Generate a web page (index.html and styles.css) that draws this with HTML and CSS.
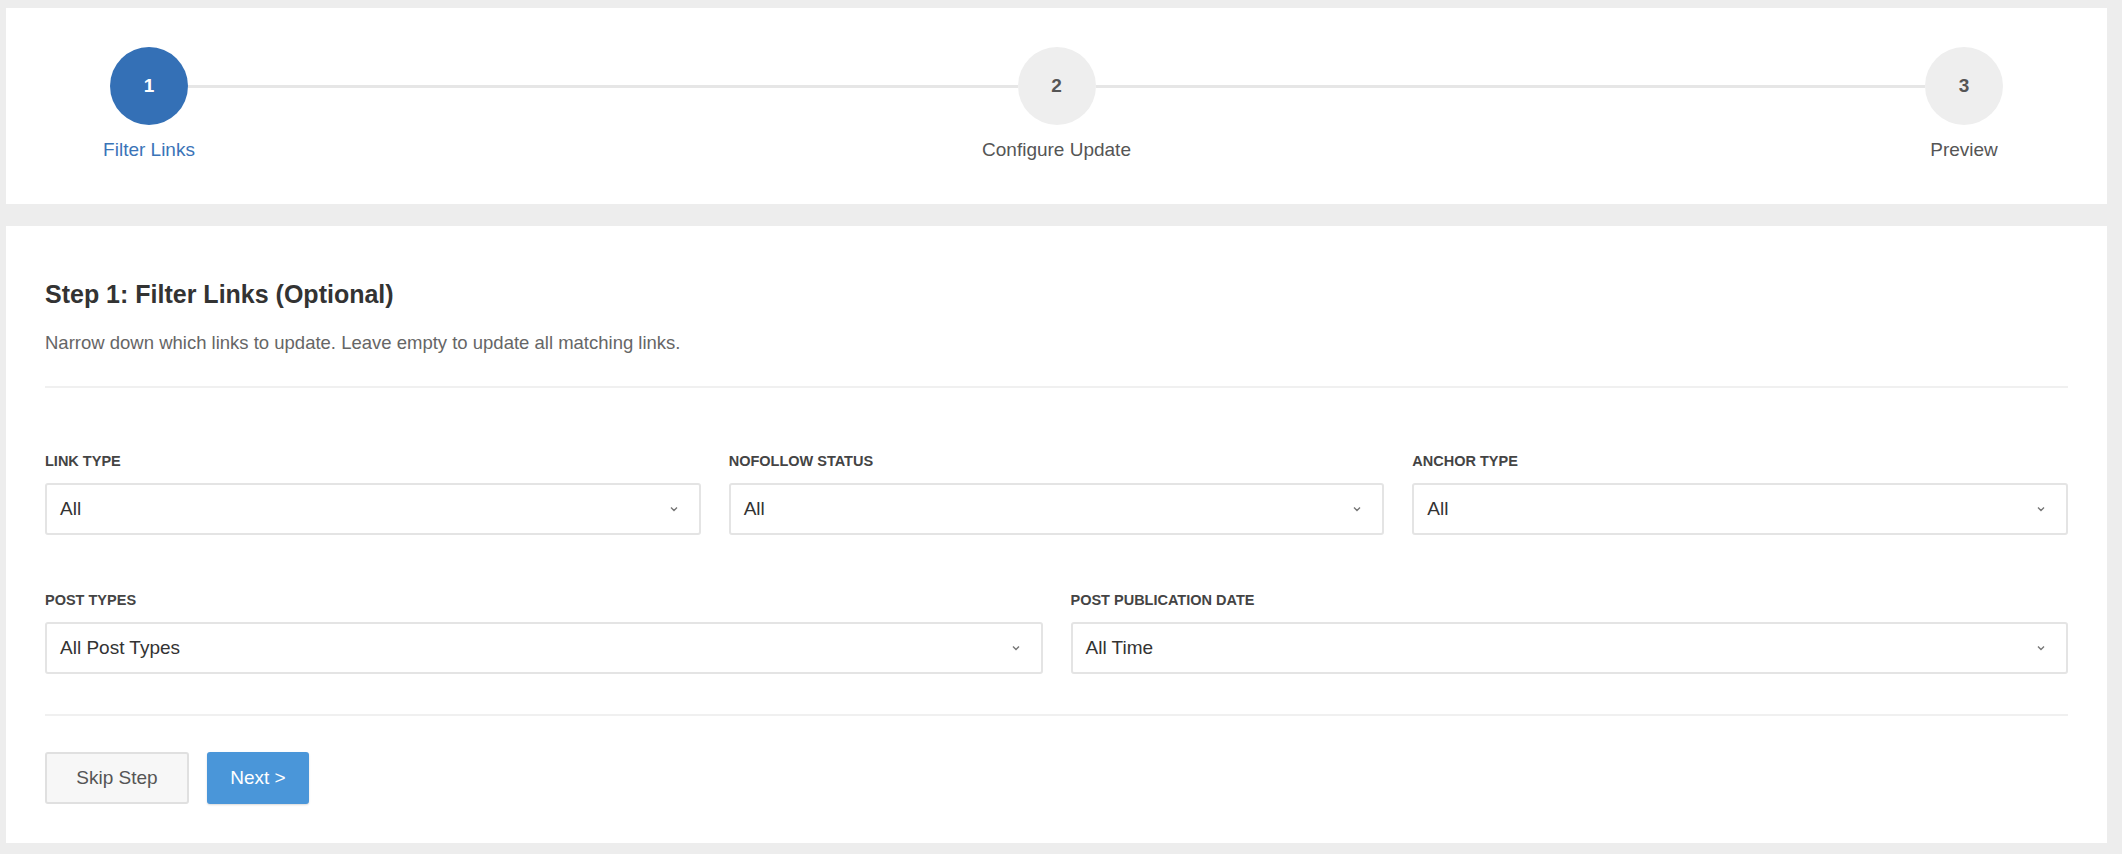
FILE: index.html
```html
<!DOCTYPE html>
<html>

<head>
  <meta charset="utf-8">

  <title>Bulk update links</title>

  <link rel="stylesheet" href="styles.css">
</head>

<body>
<div id="wrapper">
  <div class="card stepper">
    <div class="step active">
      <div class="circle">1</div>
      <div class="stepLabel">Filter Links</div>
    </div>
    <div class="connector"></div>
    <div class="step">
      <div class="circle">2</div>
      <div class="stepLabel">Configure Update</div>
    </div>
    <div class="connector"></div>
    <div class="step">
      <div class="circle">3</div>
      <div class="stepLabel">Preview</div>
    </div>
  </div>

  <div class="card panel">
    <h2>Step 1: Filter Links (Optional)</h2>
    <p class="desc">Narrow down which links to update. Leave empty to update all matching links.</p>
    <hr>

    <div class="row three">
      <div class="field">
        <label>Link Type</label>
        <div class="select"><span>All</span><svg width="10" height="10" viewBox="0 0 10 10"><path d="M2 3.5l3 3 3-3" fill="none" stroke="#777" stroke-width="1.4"/></svg></div>
      </div>
      <div class="field">
        <label>Nofollow Status</label>
        <div class="select"><span>All</span><svg width="10" height="10" viewBox="0 0 10 10"><path d="M2 3.5l3 3 3-3" fill="none" stroke="#777" stroke-width="1.4"/></svg></div>
      </div>
      <div class="field">
        <label>Anchor Type</label>
        <div class="select"><span>All</span><svg width="10" height="10" viewBox="0 0 10 10"><path d="M2 3.5l3 3 3-3" fill="none" stroke="#777" stroke-width="1.4"/></svg></div>
      </div>
    </div>

    <div class="row two">
      <div class="field">
        <label>Post Types</label>
        <div class="select"><span>All Post Types</span><svg width="10" height="10" viewBox="0 0 10 10"><path d="M2 3.5l3 3 3-3" fill="none" stroke="#777" stroke-width="1.4"/></svg></div>
      </div>
      <div class="field">
        <label>Post Publication Date</label>
        <div class="select"><span>All Time</span><svg width="10" height="10" viewBox="0 0 10 10"><path d="M2 3.5l3 3 3-3" fill="none" stroke="#777" stroke-width="1.4"/></svg></div>
      </div>
    </div>

    <hr class="bottomRule">

    <div class="actions">
      <button class="skip">Skip Step</button>
      <button class="next">Next &gt;</button>
    </div>
  </div>
</div>
</body>

</html>
```

FILE: styles.css
```css
* {
  font-family: "Liberation Sans", Arial, sans-serif;
  box-sizing: border-box;
}

body {
  margin: 0;
  background-color: #ededed;
}

#wrapper {
  padding: 8px 15px 0 6px;
}

.card {
  background-color: #fff;
}

/* stepper */

.stepper {
  display: flex;
  align-items: flex-start;
  height: 196px;
  padding: 39px 104px 0 104px;
}

.step {
  width: 78px;
  display: flex;
  flex-direction: column;
  align-items: center;
}

.circle {
  width: 78px;
  height: 78px;
  border-radius: 50%;
  background-color: #eeeeee;
  color: #555;
  font-size: 19px;
  font-weight: bold;
  display: flex;
  align-items: center;
  justify-content: center;
}

.stepLabel {
  margin-top: 14px;
  font-size: 19px;
  color: #555;
  white-space: nowrap;
}

.step.active .circle {
  background-color: #3470b6;
  color: #fff;
}

.step.active .stepLabel {
  color: #3a74b8;
}

.connector {
  flex: 1;
  height: 3px;
  margin-top: 38px;
  background-color: #e6e6e6;
}

/* filter panel */

.panel {
  margin-top: 22px;
  padding: 53px 39px 39px 39px;
}

h2 {
  margin: 0;
  font-size: 25px;
  line-height: 30px;
  color: #333;
}

.desc {
  margin: 21px 0 0 0;
  font-size: 18.5px;
  line-height: 26px;
  color: #666;
}

hr {
  border: none;
  height: 2px;
  background-color: #f0f0f0;
  margin: 30px 0 0 0;
}

.row {
  display: grid;
  gap: 28px;
  margin-top: 64px;
}

.row.three {
  grid-template-columns: 1fr 1fr 1fr;
}

.row.two {
  grid-template-columns: 1fr 1fr;
  margin-top: 56px;
}

label {
  display: block;
  font-size: 14.5px;
  line-height: 18px;
  font-weight: bold;
  text-transform: uppercase;
  color: #444;
}

.select {
  margin-top: 13px;
  height: 52px;
  border: 2px solid #e4e4e4;
  border-radius: 3px;
  display: flex;
  align-items: center;
  justify-content: space-between;
  padding: 0 20px 0 13px;
  font-size: 19px;
  color: #333;
}

hr.bottomRule {
  margin-top: 40px;
}

.actions {
  display: flex;
  gap: 18px;
  margin-top: 36px;
}

button {
  height: 52px;
  font-size: 19px;
  border-radius: 3px;
  cursor: pointer;
}

.skip {
  width: 144px;
  background-color: #f7f7f7;
  border: 2px solid #e0e0e0;
  color: #555;
}

.next {
  width: 102px;
  background-color: #4a96d9;
  border: none;
  color: #fff;
  box-shadow: 0 1px 2px rgba(0, 0, 0, 0.15);
}
```
